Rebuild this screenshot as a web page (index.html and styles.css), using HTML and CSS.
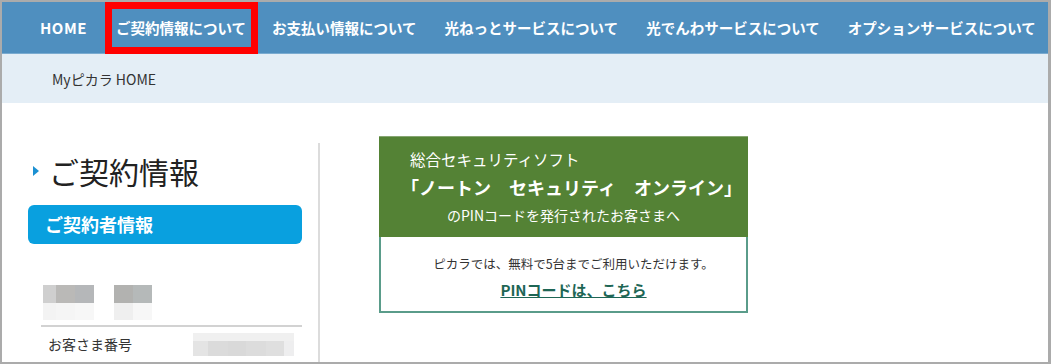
FILE: index.html
```html
<!DOCTYPE html>
<html lang="ja">
<head>
    <meta charset="UTF-8">
    <meta name="viewport" content="width=device-width, initial-scale=1.0">
    <title>Myピカラ - ご契約情報</title>
    <link rel="stylesheet" href="styles.css">
</head>
<body>
    <div class="frame">
        <nav class="gnav">
            <a class="gnav-item gnav-home" href="#">HOME</a>
            <a class="gnav-item is-marked" href="#">ご契約情報について</a>
            <a class="gnav-item" href="#">お支払い情報について</a>
            <a class="gnav-item" href="#">光ねっとサービスについて</a>
            <a class="gnav-item" href="#">光でんわサービスについて</a>
            <a class="gnav-item" href="#">オプションサービスについて</a>
        </nav>

        <div class="crumb">Myピカラ HOME</div>

        <div class="content">
            <aside class="side">
                <h2 class="side-title">ご契約情報</h2>
                <div class="side-btn">ご契約者情報</div>

                <!-- blurred customer name -->
                <div class="name-blur">
                    <div class="mosaic">
                        <span class="c w13 g1"></span><span class="c w19 g2"></span><span class="c w19 g3"></span>
                        <span class="c w13 l1"></span><span class="c w19 l2"></span><span class="c w19 l3"></span>
                    </div>
                    <div class="mosaic">
                        <span class="c w19 g4"></span><span class="c w19 g5"></span>
                        <span class="c w19 l4"></span><span class="c w19 l3"></span>
                    </div>
                </div>

                <div class="info-row">
                    <span class="info-label">お客さま番号</span>
                    <div class="num-blur">
                        <span class="n1"></span><span class="n2"></span><span class="n3"></span><span class="n4"></span><span class="n5"></span><span class="n6"></span>
                    </div>
                </div>
            </aside>

            <div class="divider"></div>

            <div class="main">
                <div class="norton">
                    <div class="norton-head">
                        <p class="norton-sub">総合セキュリティソフト</p>
                        <p class="norton-title">「ノートン　セキュリティ　オンライン」</p>
                        <p class="norton-for">のPINコードを発行されたお客さまへ</p>
                    </div>
                    <div class="norton-body">
                        <p class="norton-note">ピカラでは、無料で5台までご利用いただけます。</p>
                        <a class="norton-link" href="#">PINコードは、こちら</a>
                    </div>
                </div>
            </div>
        </div>
    </div>
</body>
</html>
```

FILE: styles.css
```css
body {
    margin: 0;
    font-family: "Noto Sans CJK JP", "Noto Sans", sans-serif;
    color: #333;
    background: #fff;
}
p {
    margin: 0;
}
.frame {
    width: 1051px;
    height: 364px;
    box-sizing: border-box;
    border: 2px solid #ababab;
    border-right-width: 3px;
    display: flex;
    flex-direction: column;
    overflow: hidden;
}

/* global nav */
.gnav {
    height: 51px;
    flex-shrink: 0;
    background-color: #4f8fbf;
    border-bottom: 1px solid #7aabd0;
    display: flex;
    align-items: center;
    padding-left: 24px;
    white-space: nowrap;
}
.gnav-item {
    color: #fff;
    font-weight: bold;
    font-size: 14.5px;
    text-decoration: none;
    padding: 0 14px;
    line-height: 52px;
    height: 52px;
    align-self: flex-start;
}
.gnav-home {
    font-size: 15px;
    letter-spacing: 0.5px;
    padding-right: 15px;
}
.is-marked {
    box-shadow: inset 0 0 0 7px #ff0000;
    padding: 0 12px 0 11px;
    margin-left: 3px;
}

.crumb {
    height: 49px;
    flex-shrink: 0;
    background-color: #e4eef6;
    display: flex;
    align-items: center;
    padding-left: 50px;
    font-size: 14px;
    color: #333;
}

/* content */
.content {
    flex: 1;
    display: flex;
    padding: 33px 0 0 26px;
}
.side {
    width: 274px;
    flex-shrink: 0;
}
.side-title {
    position: relative;
    margin: 15px 0 0;
    padding-left: 21px;
    font-size: 30px;
    font-weight: normal;
    line-height: 40px;
    color: #222;
}
.side-title::before {
    content: "";
    position: absolute;
    left: 5px;
    top: 15px;
    border-left: 6px solid #1b90d2;
    border-top: 5px solid transparent;
    border-bottom: 5px solid transparent;
}
.side-btn {
    margin-top: 14px;
    height: 39px;
    line-height: 39px;
    padding-left: 17px;
    background-color: #09a0df;
    border-radius: 6px;
    color: #fff;
    font-size: 18px;
    font-weight: bold;
}

.name-blur {
    display: flex;
    gap: 20px;
    margin: 41px 0 0 15px;
}
.mosaic {
    display: grid;
    grid-auto-flow: row;
    grid-template-rows: 18px 17px;
}
.mosaic:first-child {
    grid-template-columns: 13px 19px 19px;
}
.mosaic:last-child {
    grid-template-columns: 19px 19px;
}
.c { display: block; }
.g1 { background: #cfcfcf; }
.g2 { background: #bab9b7; }
.g3 { background: #b5b7b9; }
.g4 { background: #b2b2b0; }
.g5 { background: #b5b9b9; }
.l1 { background: #f3f3f3; }
.l2 { background: #f5f5f5; }
.l3 { background: #f7f7f7; }
.l4 { background: #efefef; }

.info-row {
    margin: 5px 0 0 13px;
    border-top: 2px solid #d2d2d2;
    display: flex;
    align-items: flex-start;
}
.info-label {
    padding: 6px 0 0 7px;
    font-size: 14px;
    line-height: 22px;
    width: 145px;
}
.num-blur {
    margin-top: 6px;
    display: grid;
    grid-template-columns: 15px 20px 18px 20px 18px 10px;
    grid-template-rows: 8px 15px;
    background: #f0f0f0;
}
.num-blur span {
    grid-row: 2;
    background: #dedede;
}
.num-blur .n1 { background: #e4e4e4; }
.num-blur .n2 { background: #dbdbdb; }
.num-blur .n3 { background: #d9d9d9; }
.num-blur .n4 { background: #dcdcdc; }
.num-blur .n5 { background: #dfdfdf; }
.num-blur .n6 { background: #eeeeef; }

.divider {
    width: 2px;
    margin: 7px 0 0 16px;
    background-color: #dcdcdc;
}

/* norton banner */
.main {
    margin-left: 59px;
}
.norton {
    width: 369px;
}
.norton-head {
    height: 101px;
    box-sizing: border-box;
    padding-top: 12px;
    background-color: #548235;
    border-top: 1px solid #86a672;
    color: #fff;
}
.norton-sub {
    padding-left: 31px;
    font-size: 15.5px;
    line-height: 22px;
    margin-top: -1px;
}
.norton-title {
    margin-top: 3px;
    padding-left: 16px;
    text-align: center;
    font-size: 18px;
    font-weight: bold;
    line-height: 28px;
    white-space: nowrap;
}
.norton-for {
    margin-top: 3px;
    text-align: center;
    font-size: 14px;
    line-height: 22px;
}
.norton-body {
    height: 76px;
    box-sizing: border-box;
    border: 2px solid #5a9c8a;
    border-top: none;
    padding-top: 17px;
    text-align: center;
    padding-left: 20px;
}
.norton-note {
    font-size: 12.5px;
    line-height: 20px;
    color: #333;
}
.norton-link {
    display: inline-block;
    margin-top: 5px;
    font-size: 15px;
    font-weight: bold;
    line-height: 22px;
    color: #1e6655;
}
```
